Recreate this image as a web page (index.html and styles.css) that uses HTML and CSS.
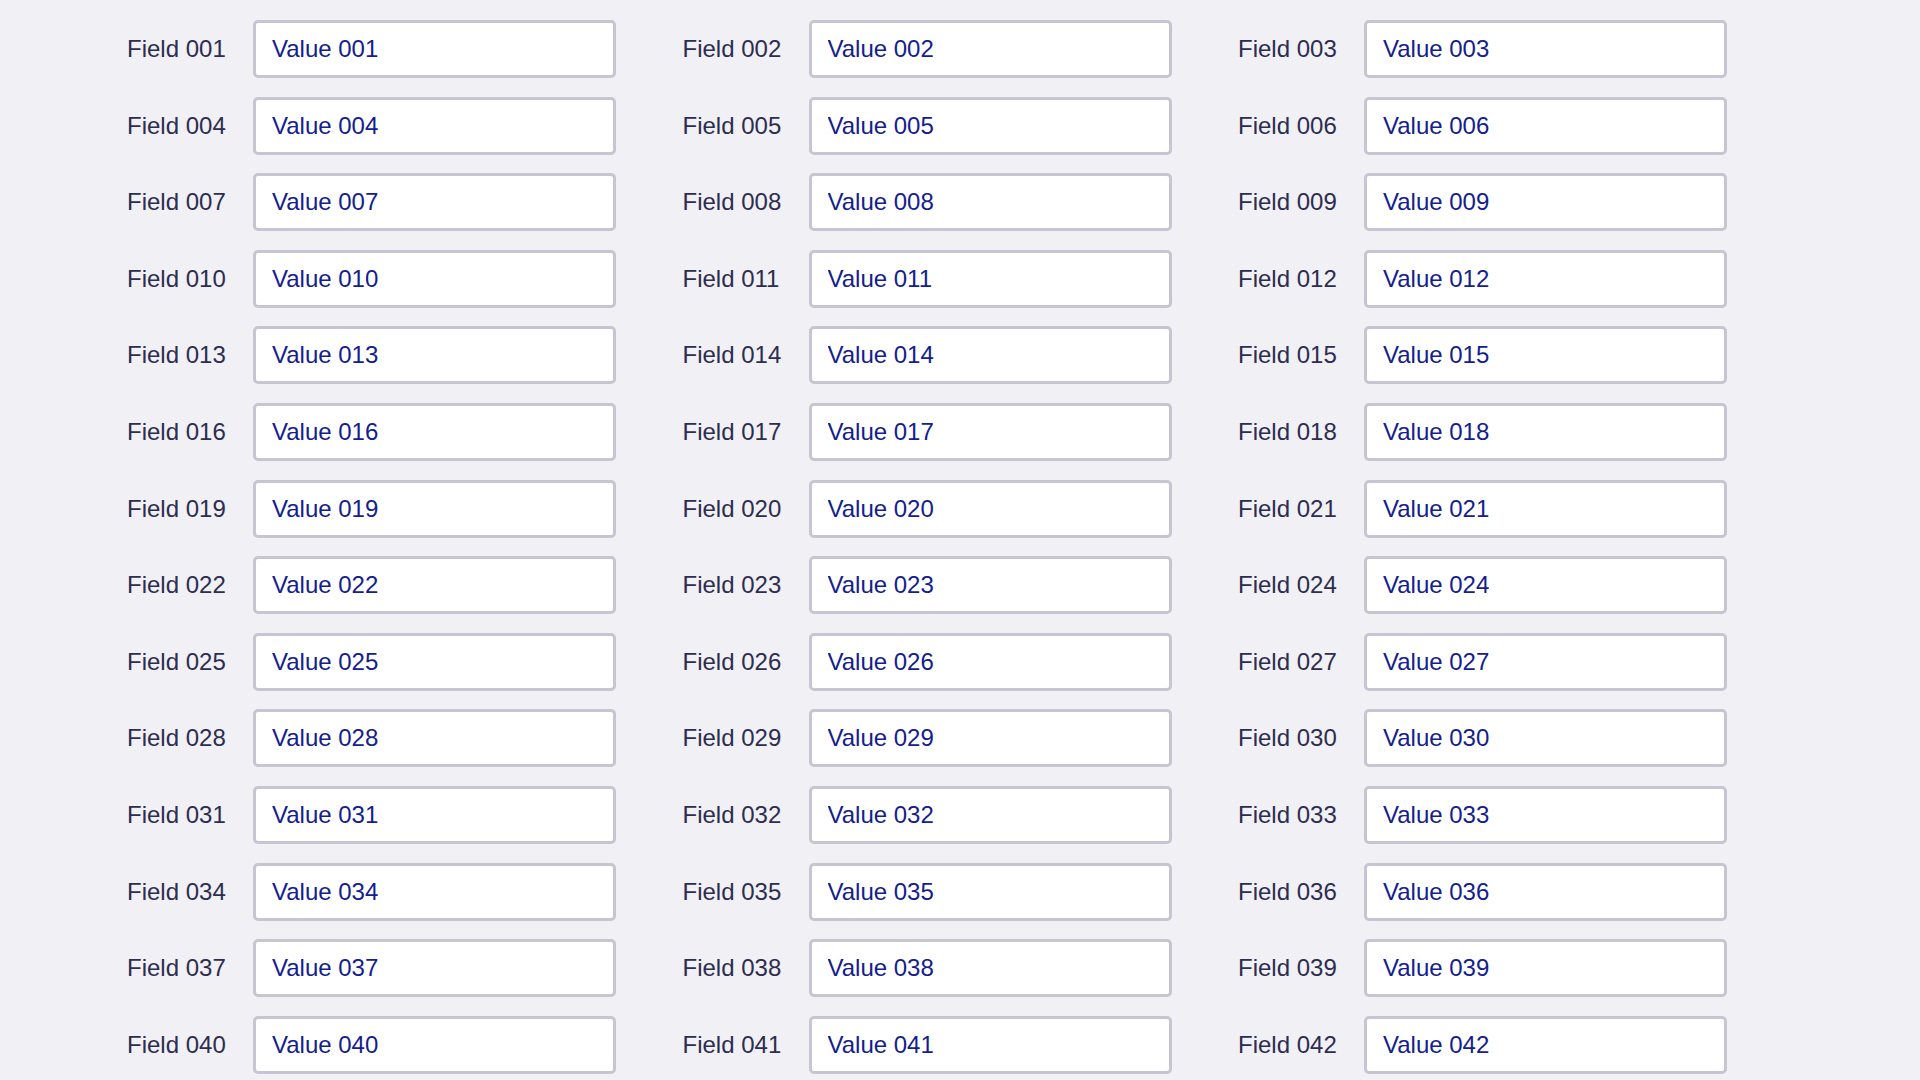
FILE: index.html
```html
<!DOCTYPE html>
<html lang="en">
<head>
<meta charset="utf-8">
<title>Fields</title>
<link rel="stylesheet" href="styles.css">
</head>
<body>
<form class="form-grid">
<label class="field"><span class="field-label">Field 001</span><input class="field-input" type="text" value="Value 001"></label>
<label class="field"><span class="field-label">Field 002</span><input class="field-input" type="text" value="Value 002"></label>
<label class="field"><span class="field-label">Field 003</span><input class="field-input" type="text" value="Value 003"></label>
<label class="field"><span class="field-label">Field 004</span><input class="field-input" type="text" value="Value 004"></label>
<label class="field"><span class="field-label">Field 005</span><input class="field-input" type="text" value="Value 005"></label>
<label class="field"><span class="field-label">Field 006</span><input class="field-input" type="text" value="Value 006"></label>
<label class="field"><span class="field-label">Field 007</span><input class="field-input" type="text" value="Value 007"></label>
<label class="field"><span class="field-label">Field 008</span><input class="field-input" type="text" value="Value 008"></label>
<label class="field"><span class="field-label">Field 009</span><input class="field-input" type="text" value="Value 009"></label>
<label class="field"><span class="field-label">Field 010</span><input class="field-input" type="text" value="Value 010"></label>
<label class="field"><span class="field-label">Field 011</span><input class="field-input" type="text" value="Value 011"></label>
<label class="field"><span class="field-label">Field 012</span><input class="field-input" type="text" value="Value 012"></label>
<label class="field"><span class="field-label">Field 013</span><input class="field-input" type="text" value="Value 013"></label>
<label class="field"><span class="field-label">Field 014</span><input class="field-input" type="text" value="Value 014"></label>
<label class="field"><span class="field-label">Field 015</span><input class="field-input" type="text" value="Value 015"></label>
<label class="field"><span class="field-label">Field 016</span><input class="field-input" type="text" value="Value 016"></label>
<label class="field"><span class="field-label">Field 017</span><input class="field-input" type="text" value="Value 017"></label>
<label class="field"><span class="field-label">Field 018</span><input class="field-input" type="text" value="Value 018"></label>
<label class="field"><span class="field-label">Field 019</span><input class="field-input" type="text" value="Value 019"></label>
<label class="field"><span class="field-label">Field 020</span><input class="field-input" type="text" value="Value 020"></label>
<label class="field"><span class="field-label">Field 021</span><input class="field-input" type="text" value="Value 021"></label>
<label class="field"><span class="field-label">Field 022</span><input class="field-input" type="text" value="Value 022"></label>
<label class="field"><span class="field-label">Field 023</span><input class="field-input" type="text" value="Value 023"></label>
<label class="field"><span class="field-label">Field 024</span><input class="field-input" type="text" value="Value 024"></label>
<label class="field"><span class="field-label">Field 025</span><input class="field-input" type="text" value="Value 025"></label>
<label class="field"><span class="field-label">Field 026</span><input class="field-input" type="text" value="Value 026"></label>
<label class="field"><span class="field-label">Field 027</span><input class="field-input" type="text" value="Value 027"></label>
<label class="field"><span class="field-label">Field 028</span><input class="field-input" type="text" value="Value 028"></label>
<label class="field"><span class="field-label">Field 029</span><input class="field-input" type="text" value="Value 029"></label>
<label class="field"><span class="field-label">Field 030</span><input class="field-input" type="text" value="Value 030"></label>
<label class="field"><span class="field-label">Field 031</span><input class="field-input" type="text" value="Value 031"></label>
<label class="field"><span class="field-label">Field 032</span><input class="field-input" type="text" value="Value 032"></label>
<label class="field"><span class="field-label">Field 033</span><input class="field-input" type="text" value="Value 033"></label>
<label class="field"><span class="field-label">Field 034</span><input class="field-input" type="text" value="Value 034"></label>
<label class="field"><span class="field-label">Field 035</span><input class="field-input" type="text" value="Value 035"></label>
<label class="field"><span class="field-label">Field 036</span><input class="field-input" type="text" value="Value 036"></label>
<label class="field"><span class="field-label">Field 037</span><input class="field-input" type="text" value="Value 037"></label>
<label class="field"><span class="field-label">Field 038</span><input class="field-input" type="text" value="Value 038"></label>
<label class="field"><span class="field-label">Field 039</span><input class="field-input" type="text" value="Value 039"></label>
<label class="field"><span class="field-label">Field 040</span><input class="field-input" type="text" value="Value 040"></label>
<label class="field"><span class="field-label">Field 041</span><input class="field-input" type="text" value="Value 041"></label>
<label class="field"><span class="field-label">Field 042</span><input class="field-input" type="text" value="Value 042"></label>
</form>
</body>
</html>
```

FILE: styles.css
```css
html, body {
  margin: 0;
  padding: 0;
  background: #f0f0f5;
  height: 100%;
  overflow: hidden;
}

body {
  font-family: "Liberation Sans", Arial, Helvetica, sans-serif;
}

.form-grid {
  display: grid;
  grid-template-columns: repeat(3, 555.5px);
  row-gap: 18.6px;
  padding: 20px 0 0 127px;
  margin: 0;
}

.field {
  display: flex;
  align-items: center;
}

.field-label {
  flex: 0 0 99px;
  font-size: 24px;
  color: #2d2d4f;
  margin-right: 27px;
  white-space: nowrap;
}

.field-input {
  box-sizing: border-box;
  width: 363px;
  height: 58px;
  margin: 0;
  padding: 0 16px;
  border: 3px solid #c6c6d3;
  border-radius: 5px;
  background: #ffffff;
  color: #13208e;
  font-family: "Liberation Sans", Arial, Helvetica, sans-serif;
  font-size: 24px;
  outline: none;
}
```
